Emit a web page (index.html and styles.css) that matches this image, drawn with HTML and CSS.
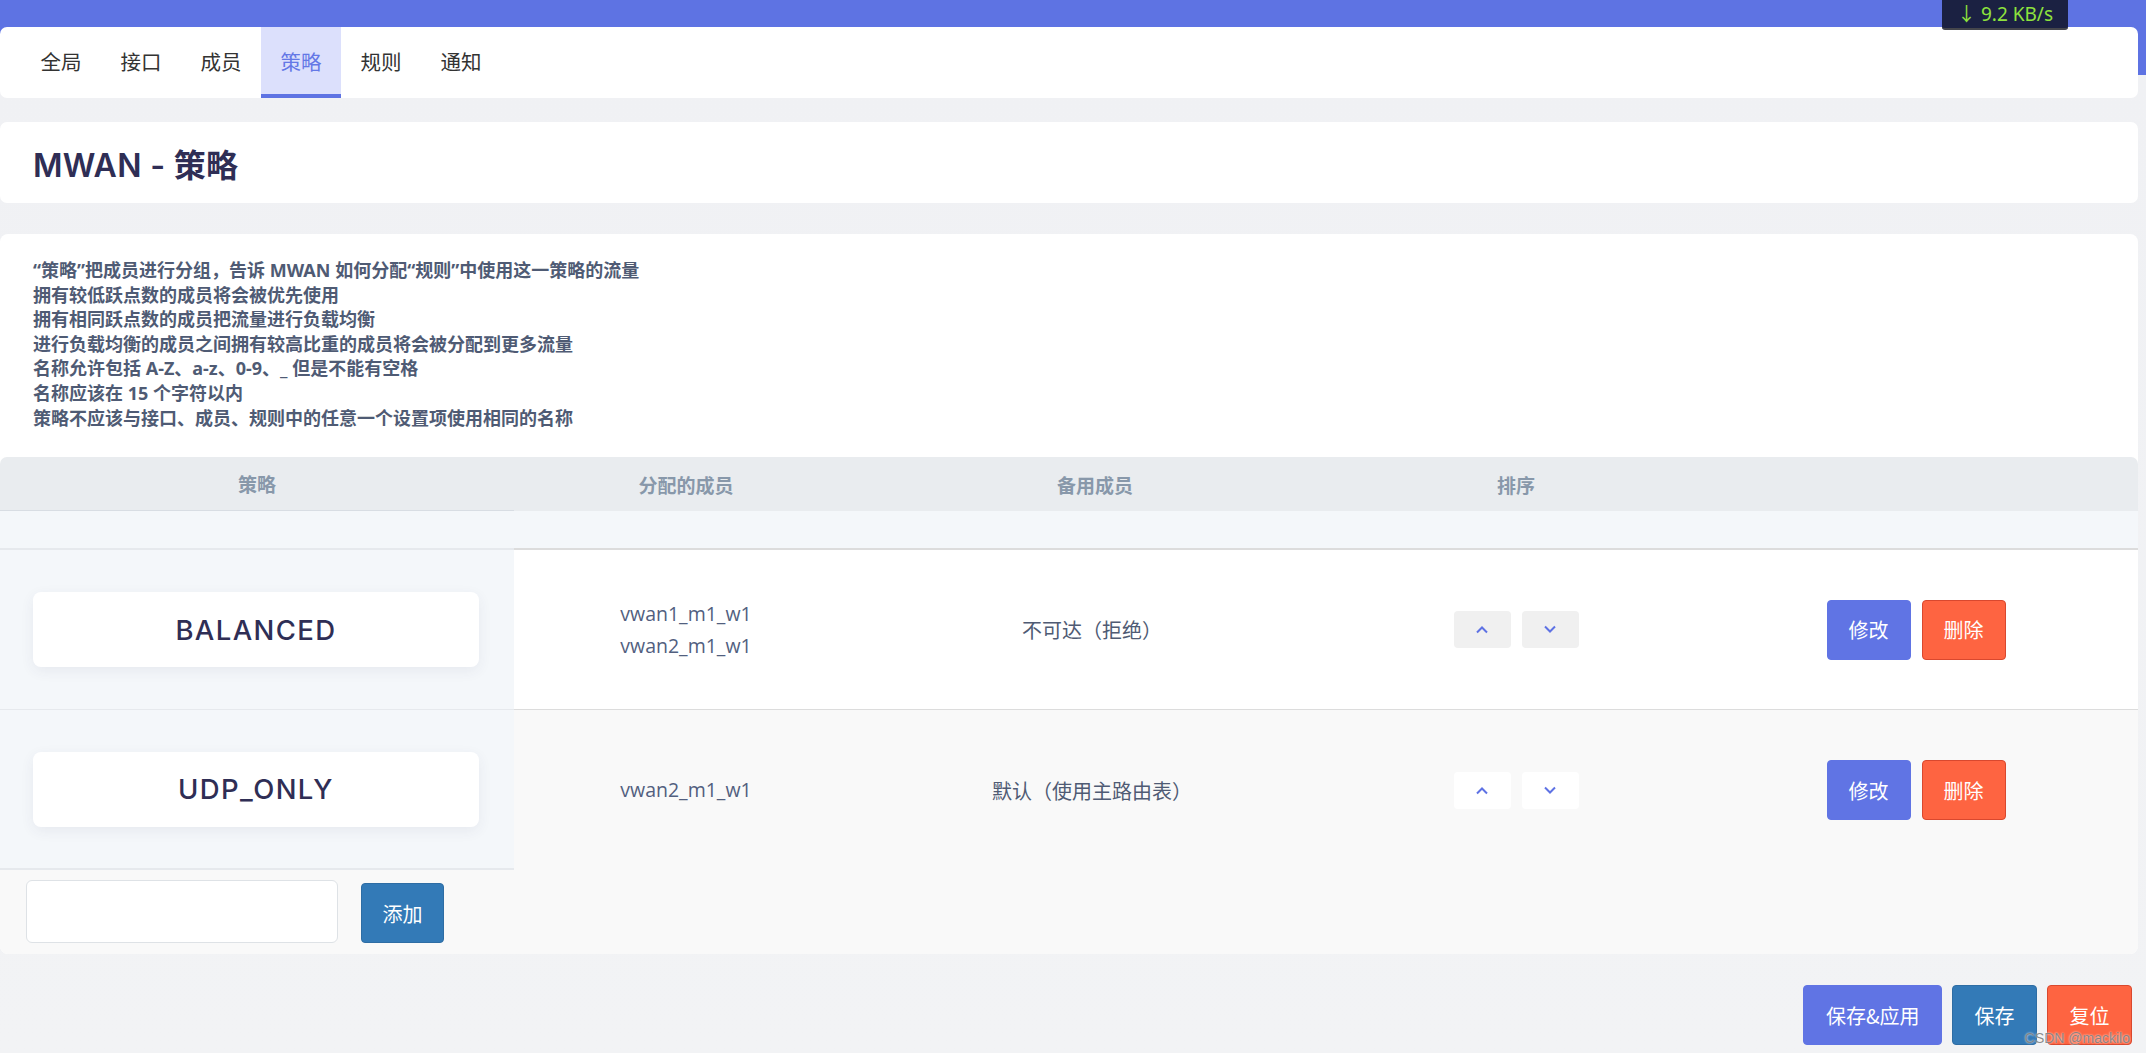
FILE: index.html
```html
<!DOCTYPE html>
<html lang="zh-CN">
<head>
<meta charset="utf-8">
<title>MWAN - 策略</title>
<link rel="stylesheet" href="styles.css">
</head>
<body>
<div class="netspeed">↓ 9.2 KB/s</div>
<div class="page">
  <nav class="card tabs">
    <a class="tab">全局</a>
    <a class="tab">接口</a>
    <a class="tab">成员</a>
    <a class="tab active">策略</a>
    <a class="tab">规则</a>
    <a class="tab">通知</a>
  </nav>

  <header class="card title-card">
    <h2 class="title">MWAN - 策略</h2>
  </header>

  <section class="card main-card">
    <div class="desc">
      <div>“策略”把成员进行分组，告诉 MWAN 如何分配“规则”中使用这一策略的流量</div>
      <div>拥有较低跃点数的成员将会被优先使用</div>
      <div>拥有相同跃点数的成员把流量进行负载均衡</div>
      <div>进行负载均衡的成员之间拥有较高比重的成员将会被分配到更多流量</div>
      <div>名称允许包括 A-Z、a-z、0-9、_ 但是不能有空格</div>
      <div>名称应该在 15 个字符以内</div>
      <div>策略不应该与接口、成员、规则中的任意一个设置项使用相同的名称</div>
    </div>

    <div class="table">
      <div class="row thead">
        <div class="cell">策略</div>
        <div class="cell">分配的成员</div>
        <div class="cell">备用成员</div>
        <div class="cell">排序</div>
        <div class="cell"></div>
      </div>
      <div class="row placeholder">
        <div class="cell first"></div>
        <div class="cell"></div>
        <div class="cell"></div>
        <div class="cell"></div>
        <div class="cell"></div>
      </div>
      <div class="row trow odd">
        <div class="cell first"><div class="name-box">BALANCED</div></div>
        <div class="cell members"><div>vwan1_m1_w1</div><div>vwan2_m1_w1</div></div>
        <div class="cell text">不可达（拒绝）</div>
        <div class="cell sort">
          <button class="sort-btn"><svg width="14" height="9" viewBox="0 0 14 9"><path d="M2 7.5 L7 2.5 L12 7.5" fill="none" stroke="#5e72e4" stroke-width="2"/></svg></button>
          <button class="sort-btn"><svg width="14" height="9" viewBox="0 0 14 9"><path d="M2 1.5 L7 6.5 L12 1.5" fill="none" stroke="#5e72e4" stroke-width="2"/></svg></button>
        </div>
        <div class="cell ops">
          <button class="btn btn-primary">修改</button>
          <button class="btn btn-danger">删除</button>
        </div>
      </div>
      <div class="row trow even">
        <div class="cell first"><div class="name-box">UDP_ONLY</div></div>
        <div class="cell members"><div>vwan2_m1_w1</div></div>
        <div class="cell text">默认（使用主路由表）</div>
        <div class="cell sort">
          <button class="sort-btn"><svg width="14" height="9" viewBox="0 0 14 9"><path d="M2 7.5 L7 2.5 L12 7.5" fill="none" stroke="#5e72e4" stroke-width="2"/></svg></button>
          <button class="sort-btn"><svg width="14" height="9" viewBox="0 0 14 9"><path d="M2 1.5 L7 6.5 L12 1.5" fill="none" stroke="#5e72e4" stroke-width="2"/></svg></button>
        </div>
        <div class="cell ops">
          <button class="btn btn-primary">修改</button>
          <button class="btn btn-danger">删除</button>
        </div>
      </div>
      <div class="tfoot">
        <input class="name-input" type="text">
        <button class="btn btn-blue">添加</button>
      </div>
    </div>
  </section>

  <div class="actions">
    <button class="btn btn-primary">保存&amp;应用</button>
    <button class="btn btn-blue">保存</button>
    <button class="btn btn-danger">复位</button>
  </div>
</div>
<div class="watermark">CSDN @mackilo</div>
</body>
</html>
```

FILE: styles.css
```css
html, body {
  margin: 0;
  padding: 0;
}
body {
  width: 2146px;
  height: 1053px;
  overflow: hidden;
  position: relative;
  background: linear-gradient(#5e73e3 0, #5e73e3 75px, #f0f1f4 75px, #f2f3f5 100%);
  font-family: "Noto Sans", "Noto Sans CJK SC", sans-serif;
  color: #32325d;
}

.netspeed {
  position: absolute;
  top: 0;
  left: 1942px;
  width: 126px;
  height: 28px;
  background: #1b2142;
  border-bottom: 2px solid #45464c;
  border-radius: 0 0 3px 3px;
  color: #8ee33d;
  font-size: 19px;
  line-height: 28px;
  text-align: center;
  z-index: 5;
}

.page {
  padding: 27px 8px 0 0;
}

.card {
  background: #fff;
  border-radius: 7px;
}

/* tabs */
.tabs {
  height: 71px;
  display: flex;
  padding-left: 21px;
  box-sizing: border-box;
}
.tab {
  width: 80px;
  display: flex;
  align-items: center;
  justify-content: center;
  font-family: "Noto Sans CJK SC", sans-serif;
  font-size: 20.5px;
  color: #333;
  border-bottom: 4px solid transparent;
}
.tab.active {
  background: #dce0fc;
  color: #6478e6;
  border-bottom-color: #5e73e3;
}

/* title */
.title-card {
  margin-top: 24px;
  height: 81px;
  display: flex;
  align-items: center;
  padding-left: 33px;
}
.title {
  margin: 0;
  font-family: Inter, "Noto Sans CJK SC", sans-serif;
  font-weight: 600;
  font-size: 32px;
  letter-spacing: 0.3px;
  color: #2f2e55;
}

/* main card */
.main-card {
  margin-top: 31px;
  padding-top: 24px;
  border-radius: 8px;
}
.desc {
  padding: 0 33px;
  font-size: 18px;
  line-height: 24.6px;
  font-weight: 700;
  color: #4f5b74;
}

.table {
  margin-top: 27px;
}
.row {
  display: grid;
  grid-template-columns: 514px 344px 474px 368px 1fr;
}
.cell {
  display: flex;
  align-items: center;
  justify-content: center;
  box-sizing: border-box;
}

.thead {
  height: 54px;
  background: #e9ecef;
  border-radius: 7px 7px 0 0;
  font-family: "Noto Sans CJK SC", sans-serif;
  font-size: 19px;
  font-weight: 700;
  color: #8898aa;
}
.thead .cell:first-child {
  border-bottom: 1px solid #d8dde3;
}

.placeholder {
  background: #f4f7fa;
}
.placeholder .cell {
  height: 39px;
  border-bottom: 2px solid #dcdcdc;
}
.placeholder .cell.first {
  border-bottom-color: #e6e9ed;
}

.trow .cell {
  font-size: 19.5px;
  color: #525f7f;
}
.trow.odd .cell {
  height: 160px;
  background: #fff;
  border-bottom: 1px solid #dcdcdc;
}
.trow.even .cell {
  height: 160px;
  background: #f9f9f9;
}
.trow .cell.first {
  background: #f4f7fa;
  border-bottom-color: #e6e9ed;
}
.trow.even .cell.first {
  border-bottom: 2px solid #e6e9ed;
}

.name-box {
  width: 446px;
  height: 75px;
  margin-left: -2px;
  background: #fff;
  border-radius: 8px;
  box-shadow: 0 4px 14px rgba(50, 50, 93, 0.07);
  display: flex;
  align-items: center;
  justify-content: center;
  font-family: Inter, sans-serif;
  font-weight: 500;
  font-size: 27.5px;
  letter-spacing: 1.4px;
  color: #2f2e55;
}

.members {
  flex-direction: column;
  line-height: 32px;
  font-family: "Open Sans", sans-serif;
}
.cell.text {
  font-family: "Noto Sans CJK SC", sans-serif;
  font-size: 20px;
  color: #4f5b74;
  padding-right: 6px;
}

.sort {
  gap: 11px;
}
.sort-btn {
  width: 57px;
  height: 37px;
  border: none;
  border-radius: 4px;
  background: #f0f0f0;
  display: flex;
  align-items: center;
  justify-content: center;
  padding: 0;
}
.trow.even .sort-btn {
  background: #fff;
}

.ops {
  gap: 11px;
  padding-right: 6px;
}

.btn {
  height: 60px;
  padding: 0 21px;
  border-radius: 4px;
  border: 1px solid transparent;
  font-family: "Noto Sans CJK SC", sans-serif;
  font-size: 20px;
  color: #fff;
  cursor: pointer;
}
.btn-primary {
  background: #6074e4;
  border-color: #6074e4;
}
.btn-danger {
  background: #fe6441;
  border-color: #d9482e;
}
.btn-blue {
  background: #337ab7;
  border-color: #2e6da4;
}

.tfoot {
  height: 84px;
  box-sizing: border-box;
  background: #f9f9f9;
  border-radius: 0 0 8px 8px;
  display: flex;
  align-items: flex-end;
  gap: 23px;
  padding: 0 0 11px 26px;
}
.name-input {
  width: 312px;
  height: 63px;
  box-sizing: border-box;
  border: 1px solid #dee2e6;
  border-radius: 6px;
  background: #fff;
  margin: 0;
}
.tfoot .btn {
  width: 83px;
  padding: 0;
}

.actions {
  margin-top: 31px;
  display: flex;
  justify-content: flex-end;
  gap: 10px;
  padding-right: 6px;
}
.actions .btn {
  padding: 0 21.5px;
}

.watermark {
  position: absolute;
  right: 16px;
  bottom: 7px;
  font-family: "Liberation Sans", Arial, sans-serif;
  font-size: 14px;
  color: rgba(120, 120, 120, 0.85);
  text-shadow: 0 0 2px #fff;
}
```
